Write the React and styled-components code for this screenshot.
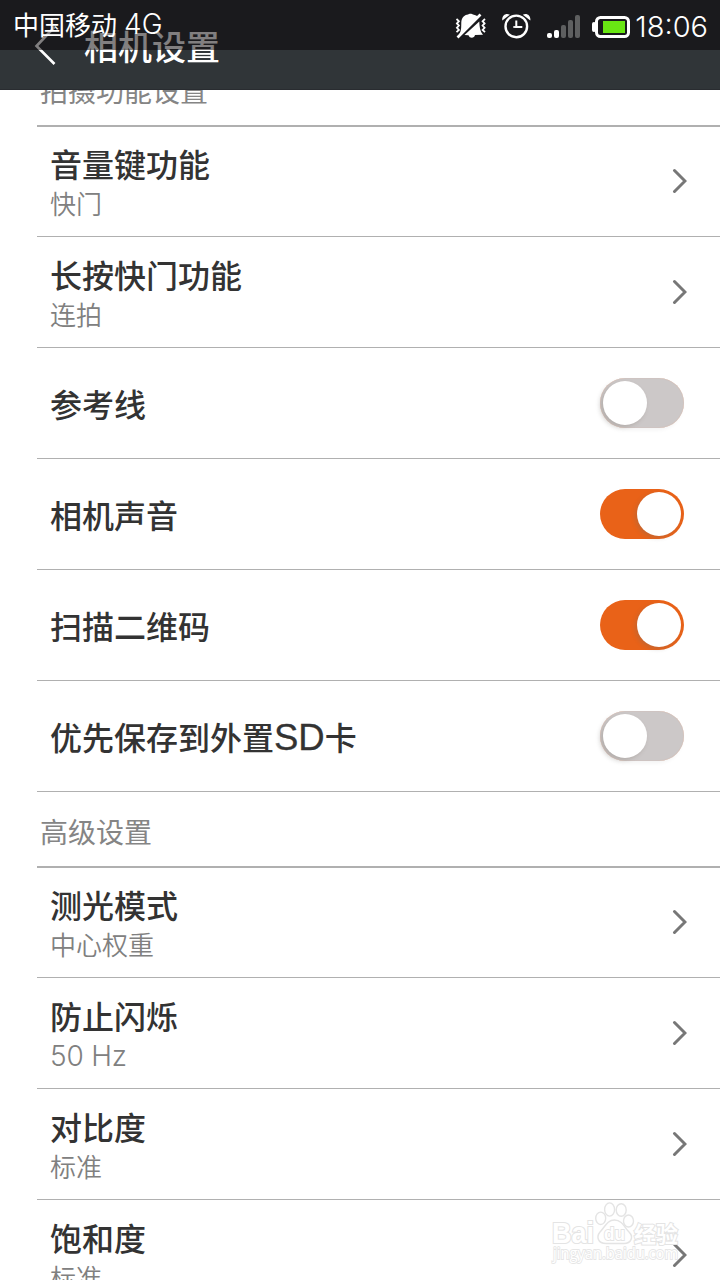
import React from "react";
import styled, { createGlobalStyle } from "styled-components";

const GlobalStyle = createGlobalStyle`
  * { box-sizing: border-box; }
  html, body { margin: 0; padding: 0; background: #fff; }
`;

const Screen = styled.div`
  position: relative;
  display: flex;
  flex-direction: column;
  width: 720px;
  height: 1280px;
  overflow: hidden;
  background: #fff;
  font-family: "Liberation Sans", "Noto Sans CJK SC", sans-serif;
`;

const StatusBar = styled.div`
  position: absolute;
  inset: 0 0 auto 0;
  z-index: 3;
  display: flex;
  align-items: center;
  height: 50px;
  padding: 0 13px;
  background: rgba(4, 0, 2, 0.5);
  color: #fff;
`;

const Carrier = styled.div`
  display: flex;
  align-items: center;
  gap: 7px;
  flex: 1;
  height: 48px;
  margin-bottom: 2px;
  font-family: "Noto Sans CJK SC", sans-serif;
  font-size: 26px;
  line-height: 48px;
`;

const Latin = styled.span`
  font-family: Inter, "Liberation Sans", sans-serif;
  font-weight: 300;
  font-size: ${(p) => p.$size}px;
  letter-spacing: ${(p) => p.$spacing || 0}px;
`;

const StatusIcons = styled.svg`
  display: block;
  width: 180px;
  height: 50px;
`;

const Clock = styled.time`
  width: 76px;
  padding-top: 8px;
  text-align: right;
  margin-right: -1px;
  line-height: 50px;
  white-space: nowrap;
`;

const Header = styled.header`
  position: relative;
  z-index: 2;
  display: flex;
  align-items: flex-start;
  flex: none;
  height: 90px;
  margin-bottom: -39px;
  padding: 22px 0 0 34px;
  background: #303538;
  border-bottom: 1px solid #292c30;
`;

const BackIcon = styled.svg`
  display: block;
  width: 22px;
  height: 46px;
`;

const HeaderTitle = styled.h1`
  margin: -1px 0 0 28px;
  color: #fff;
  font: 500 34px/50px "Noto Sans CJK SC", sans-serif;
`;

const List = styled.main`
  flex: none;
  padding-left: 37px;
`;

const SectionTitle = styled.h2`
  height: 76px;
  margin: 0 0 -1px;
  padding: 2px 0 0 3px;
  border-bottom: 2px solid #b0b0b0;
  color: #858585;
  font: 400 28px/74px "Noto Sans CJK SC", sans-serif;
`;

const Row = styled.div`
  display: flex;
  align-items: center;
  justify-content: space-between;
  height: 111px;
  padding: 0 33px 0 13px;
  border-bottom: 1px solid #b0b0b0;
`;

const Labels = styled.div`
  display: flex;
  flex-direction: column;
  margin-bottom: ${(p) => (p.$single ? 1 : 0)}px;
`;

const RowTitle = styled.div`
  color: #333;
  font: 500 32px/42px "Noto Sans CJK SC", sans-serif;
`;

const TitleLatin = styled.span`
  font-family: "Liberation Sans", sans-serif;
  font-size: 36.5px;
  font-weight: 400;
  line-height: 1;
  -webkit-text-stroke: 0.3px #333;
`;

const RowValue = styled.div`
  height: 36px;
  color: #808080;
  font: 350 26px/38px "Noto Sans CJK SC", sans-serif;
`;

const Chevron = styled.svg`
  display: block;
  width: 16px;
  height: 26px;
  margin-bottom: 1px;
`;

const Track = styled.div`
  display: flex;
  justify-content: ${(p) => (p.$on ? "flex-end" : "flex-start")};
  width: 84px;
  height: 50px;
  margin: 0 3px 1px 0;
  padding: 3px;
  border-radius: 25px;
  background: ${(p) => (p.$on ? "#e96218" : "#ccc8c8")};
  box-shadow: ${(p) => (p.$on ? "none" : "inset 0 0 1px #dda58b, -2px 2px 4px rgba(0,0,0,.05)")};
`;

const Knob = styled.div`
  width: 44px;
  height: 44px;
  border-radius: 50%;
  background: #fff;
  box-shadow: -2px 2px 4px rgba(120, 110, 100, 0.3);
`;

const Watermark = styled.svg`
  position: absolute;
  left: 545px;
  top: 1198px;
  width: 150px;
  height: 72px;
`;

const sections = [
  {
    title: "拍摄功能设置",
    rows: [
      { title: "音量键功能", value: "快门" },
      { title: "长按快门功能", value: "连拍" },
      { title: "参考线", on: false },
      { title: "相机声音", on: true },
      { title: "扫描二维码", on: true },
      { title: <>优先保存到外置<TitleLatin>SD</TitleLatin>卡</>, on: false },
    ],
  },
  {
    title: "高级设置",
    rows: [
      { title: "测光模式", value: "中心权重" },
      { title: "防止闪烁", value: <Latin $size={28} $spacing={-0.2}>50 Hz</Latin> },
      { title: "对比度", value: "标准" },
      { title: "饱和度", value: "标准" },
    ],
  },
];

function SettingRow({ title, value, on }) {
  return (
    <Row>
      <Labels $single={value === undefined}>
        <RowTitle>{title}</RowTitle>
        {value !== undefined && <RowValue>{value}</RowValue>}
      </Labels>
      {value !== undefined ? (
        <Chevron viewBox="0 0 16 26">
          <path d="M3.5 2.5 L14 13 L3.5 23.5" fill="none" stroke="#777" strokeWidth="3" strokeLinecap="round" />
        </Chevron>
      ) : (
        <Track $on={on}>
          <Knob />
        </Track>
      )}
    </Row>
  );
}

function StatusGlyphs() {
  return (
    <StatusIcons viewBox="452 0 180 50">
      {/* vibrating bell, crossed out */}
      <g fill="#fff">
        <path d="M459 34.5 C461.5 31 461.2 27 461.3 22 C461.7 17 465 15 468 14.6 C469 13.4 472 13.4 473 14.6 C475.5 15 477 16 478.5 17.5 L460.5 35 Z" />
        <path d="M479.3 21.5 C479.5 27 480 31 483 34.8 L475 35 C474.3 38.6 469.5 38.6 468.5 35.2 L464.5 35 Z" />
      </g>
      <path d="M457.5 37.5 L480.5 14.5" stroke="#fff" strokeWidth="2.6" />
      <path d="M456.5 19 l2.4 2.2 -2 2.2 2 2.2 -2 2.2 2 2.2 -2.4 2.2 M485 19 l-2.4 2.2 2 2.2 -2 2.2 2 2.2 -2 2.2 2.4 2.2" fill="none" stroke="#fff" strokeWidth="1.8" />
      {/* alarm clock */}
      <circle cx="516.3" cy="26.4" r="10.8" fill="none" stroke="#fff" strokeWidth="2.4" />
      <path d="M516.3 20.5 V27 H522.3" fill="none" stroke="#fff" strokeWidth="2" />
      <path d="M502.3 20.5 C501.5 15.5 506 12.5 509.8 14.8 Z M530.3 20.5 C531.1 15.5 526.6 12.5 522.8 14.8 Z" fill="#fff" />
      <path d="M513.3 27 h3" stroke="#fff" strokeWidth="1.8" />
      {/* signal strength */}
      <rect x="547" y="33" width="5" height="5" rx="2" fill="#fff" />
      <rect x="554" y="30" width="5" height="8" rx="2" fill="#fff" />
      <g fill="#5e5f60">
        <rect x="561" y="25" width="5" height="13" rx="2" />
        <rect x="568" y="20" width="5" height="18" rx="2" />
        <rect x="575" y="15" width="5" height="23" rx="2" />
      </g>
      {/* battery */}
      <rect x="596.5" y="17.5" width="32" height="19" rx="4" fill="none" stroke="#fff" strokeWidth="3" />
      <rect x="592" y="22" width="4" height="10" rx="2" fill="#fff" />
      <rect x="603" y="21" width="22" height="12" fill="#69e613" />
    </StatusIcons>
  );
}

function BaiduMark() {
  return (
    <Watermark viewBox="0 0 150 72">
      <g fill="#fff" stroke="#e4e4e4" strokeWidth="1.4" fontFamily='"Liberation Sans", "Noto Sans CJK SC", sans-serif' fontWeight="700">
        <text x="7" y="44.5" fontSize="30" strokeWidth="2.2" paintOrder="stroke" textLength="42" lengthAdjust="spacingAndGlyphs">Bai</text>
        <path d="M69.5 22 C77 22 80 30 84 34 C89 39 86 45.5 79 45.5 H61 C53 45.5 51 39 55 34 C60 29 62 22 69.5 22 Z" />
        <ellipse cx="55.7" cy="20.3" rx="5" ry="6.2" />
        <ellipse cx="64.6" cy="11.5" rx="5" ry="6.6" />
        <ellipse cx="76.2" cy="12" rx="5" ry="6.3" />
        <ellipse cx="83.5" cy="23" rx="5" ry="6" />
        <text x="59" y="42" fontSize="19" strokeWidth="1.8" paintOrder="stroke" textLength="21" lengthAdjust="spacingAndGlyphs">du</text>
        <text x="89" y="43.5" fontSize="22" strokeWidth="2" paintOrder="stroke" textLength="44" lengthAdjust="spacingAndGlyphs">经验</text>
      </g>
      <text x="8" y="61" fontSize="16" fontFamily='"Open Sans", sans-serif' fill="#fff" stroke="#e6e6e6" strokeWidth="1.8" paintOrder="stroke" textLength="125" lengthAdjust="spacingAndGlyphs">jingyan.baidu.com</text>
    </Watermark>
  );
}

export default function App() {
  return (
    <Screen>
      <GlobalStyle />
      <StatusBar>
        <Carrier>
          <span>中国移动</span>
          <Latin $size={28}>4G</Latin>
        </Carrier>
        <StatusGlyphs />
        <Clock>
          <Latin $size={29}>18:06</Latin>
        </Clock>
      </StatusBar>
      <Header>
        <BackIcon viewBox="0 0 22 46">
          <path d="M20.5 5 L2.5 24 L20.5 42" fill="none" stroke="#fff" strokeWidth="2.6" />
        </BackIcon>
        <HeaderTitle>相机设置</HeaderTitle>
      </Header>
      <List>
        {sections.map((section) => (
          <section key={section.title}>
            <SectionTitle>{section.title}</SectionTitle>
            {section.rows.map((row, i) => (
              <SettingRow key={i} {...row} />
            ))}
          </section>
        ))}
      </List>
      <BaiduMark />
    </Screen>
  );
}
